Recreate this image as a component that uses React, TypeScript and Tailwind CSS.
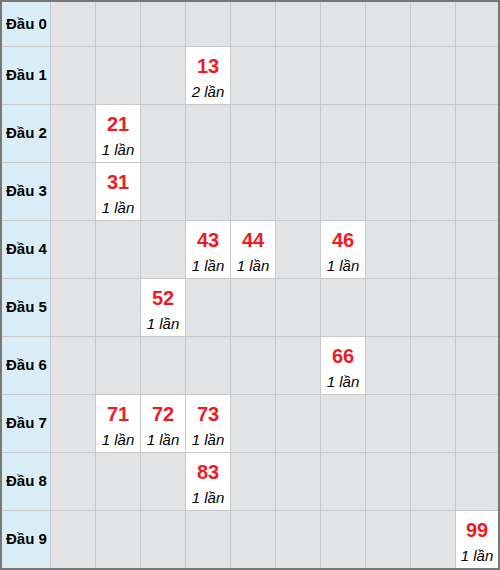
const HITS: Record<string, number> = {
  "13": 2,
  "21": 1,
  "31": 1,
  "43": 1,
  "44": 1,
  "46": 1,
  "52": 1,
  "66": 1,
  "71": 1,
  "72": 1,
  "73": 1,
  "83": 1,
  "99": 1,
};

const ROWS = [0, 1, 2, 3, 4, 5, 6, 7, 8, 9];
const COLS = [0, 1, 2, 3, 4, 5, 6, 7, 8, 9];

export default function App() {
  return (
    <div
      className="w-[500px] h-[570px] border-2 border-[#777777] bg-[#c8c9cb]"
      style={{ fontFamily: '"Liberation Sans", Arial, sans-serif' }}
    >
      <div className="grid grid-cols-[48px_repeat(9,44px)_42px] grid-rows-[44px_repeat(9,57px)] gap-px">
        {ROWS.map((head) => (
          <Row key={head} head={head} />
        ))}
      </div>
    </div>
  );
}

function Row({ head }: { head: number }) {
  return (
    <>
      <div className="bg-[#d9edf7] flex items-center pl-[4px] text-[15px] font-bold text-black">
        Đầu {head}
      </div>
      {COLS.map((tail) => {
        const num = `${head}${tail}`;
        const count = HITS[num];
        if (!count) {
          return <div key={tail} className="bg-[#e2e3e5]" />;
        }
        return (
          <div key={tail} className="bg-white flex flex-col items-center pt-[7px]">
            <span className="text-[20px] font-bold text-[#ed1c24] leading-[24px]">
              {num}
            </span>
            <span className="text-[15px] italic text-black leading-[20px] mt-[4px]">
              {count} lần
            </span>
          </div>
        );
      })}
    </>
  );
}
